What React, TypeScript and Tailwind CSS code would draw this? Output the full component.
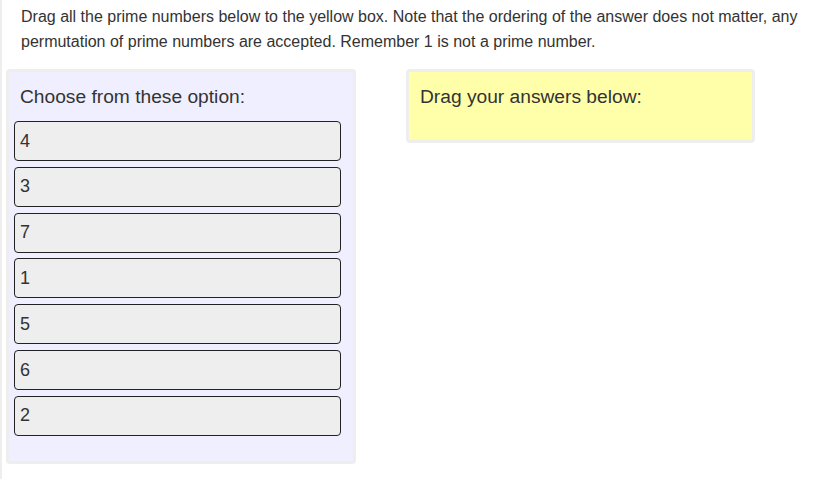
const options = ["4", "3", "7", "1", "5", "6", "2"];

const App = () => {
  return (
    <div
      className="min-h-[479px] border-l-2 border-[#eeeeee] text-[#333333]"
      style={{ fontFamily: '"Liberation Sans", Arial, sans-serif' }}
    >
      <p className="pl-[19px] pr-4 pt-[4px] text-[16px] leading-[25px]">
        Drag all the prime numbers below to the yellow box. Note that the ordering of the answer does not matter, any
        permutation of prime numbers are accepted. Remember 1 is not a prime number.
      </p>
      <div className="mt-[15px] flex items-start pl-[4px]">
        <div className="w-[350px] rounded border-[3px] border-[#eeeeee] bg-[#efefff] pb-[25px] pl-[5px]">
          <div className="pl-[6px] pt-[12px] text-[19.2px] leading-[26px]">Choose from these option:</div>
          <div className="mt-[11px] flex flex-col gap-[5.83px]">
            {options.map((o) => (
              <div
                key={o}
                className="flex h-[40px] w-[327px] items-center rounded border border-[#222222] bg-[#eeeeee] pl-[5px] text-[18px]"
              >
                {o}
              </div>
            ))}
          </div>
        </div>
        <div className="ml-[50px] h-[74px] w-[349px] rounded border-[3px] border-[#eeeeee] bg-[#ffffaa] pl-[11px] pt-[12px] text-[19.2px] leading-[26px]">
          Drag your answers below:
        </div>
      </div>
    </div>
  );
};

export default App;
